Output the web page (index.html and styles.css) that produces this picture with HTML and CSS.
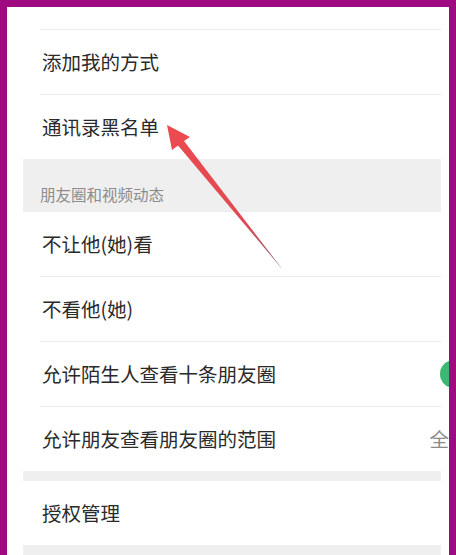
FILE: index.html
```html
<!DOCTYPE html>
<html lang="zh-CN">
<head>
<meta charset="utf-8">
<title>朋友权限</title>
<link rel="stylesheet" href="styles.css">
</head>
<body>
<div class="frame">
  <div class="panel">
    <div class="stub"></div>
    <div class="row"><span class="label">添加我的方式</span></div>
    <div class="row last"><span class="label">通讯录黑名单</span></div>
    <div class="section-header">朋友圈和视频动态</div>
    <div class="row"><span class="label">不让他(她)看</span></div>
    <div class="row"><span class="label">不看他(她)</span></div>
    <div class="row"><span class="label">允许陌生人查看十条朋友圈</span><span class="toggle"><span class="knob"></span></span></div>
    <div class="row last"><span class="label">允许朋友查看朋友圈的范围</span><span class="value">全</span></div>
    <div class="gap"></div>
    <div class="row last"><span class="label">授权管理</span></div>
    <div class="gap tail"></div>
  </div>
  <svg class="arrow" width="456" height="555" viewBox="0 0 456 555" aria-hidden="true">
    <defs>
      <linearGradient id="ag" x1="167" y1="126" x2="283" y2="269" gradientUnits="userSpaceOnUse">
        <stop offset="0" stop-color="#ec4a4f"/>
        <stop offset="0.7" stop-color="#e04a52"/>
        <stop offset="1" stop-color="#7c5a6c"/>
      </linearGradient>
    </defs>
    <polygon points="167,125 172,150 178,145.5 283,270 184,141 190,137" fill="url(#ag)"/>
  </svg>
</div>
</body>
</html>
```

FILE: styles.css
```css
html, body {
  margin: 0;
  padding: 0;
  background: #ffffff;
}

body {
  font-family: "Noto Sans CJK SC", "Noto Sans", sans-serif;
}

.frame {
  position: relative;
  width: 456px;
  height: 555px;
  box-sizing: border-box;
  border-top: 7px solid #a00a80;
  border-left: 7px solid #a00a80;
  border-right: 7px solid #a00a80;
  background: #ffffff;
  overflow: hidden;
}

.panel {
  margin-left: 16px;
  width: 418px;
  display: flex;
  flex-direction: column;
}

.stub {
  height: 22px;
  margin-left: 17px;
  border-bottom: 1px solid #ececec;
}

.row {
  height: 64px;
  margin-left: 17px;
  padding-left: 2px;
  border-bottom: 1px solid #ececec;
  display: flex;
  align-items: center;
  justify-content: space-between;
  font-size: 19.5px;
  color: #2a2a2a;
  white-space: nowrap;
}

.row.last {
  border-bottom: none;
}

.label {
  line-height: 24px;
}

.value {
  color: #8a8a8a;
  margin-right: -8px;
  line-height: 24px;
}

.toggle {
  width: 50px;
  height: 28px;
  border-radius: 14px;
  background: #3bb873;
  margin-right: -49px;
  position: relative;
  flex-shrink: 0;
}

.knob {
  position: absolute;
  right: 2px;
  top: 2px;
  width: 24px;
  height: 24px;
  border-radius: 50%;
  background: #ffffff;
}

.section-header {
  height: 53px;
  box-sizing: border-box;
  padding: 25px 0 0 17px;
  background: #efefef;
  color: #8c8c8c;
  font-size: 15.5px;
  line-height: 20px;
}

.gap {
  height: 10px;
  background: #efefef;
}

.gap.tail {
  height: 20px;
}

.arrow {
  position: absolute;
  left: -7px;
  top: -7px;
}
```
